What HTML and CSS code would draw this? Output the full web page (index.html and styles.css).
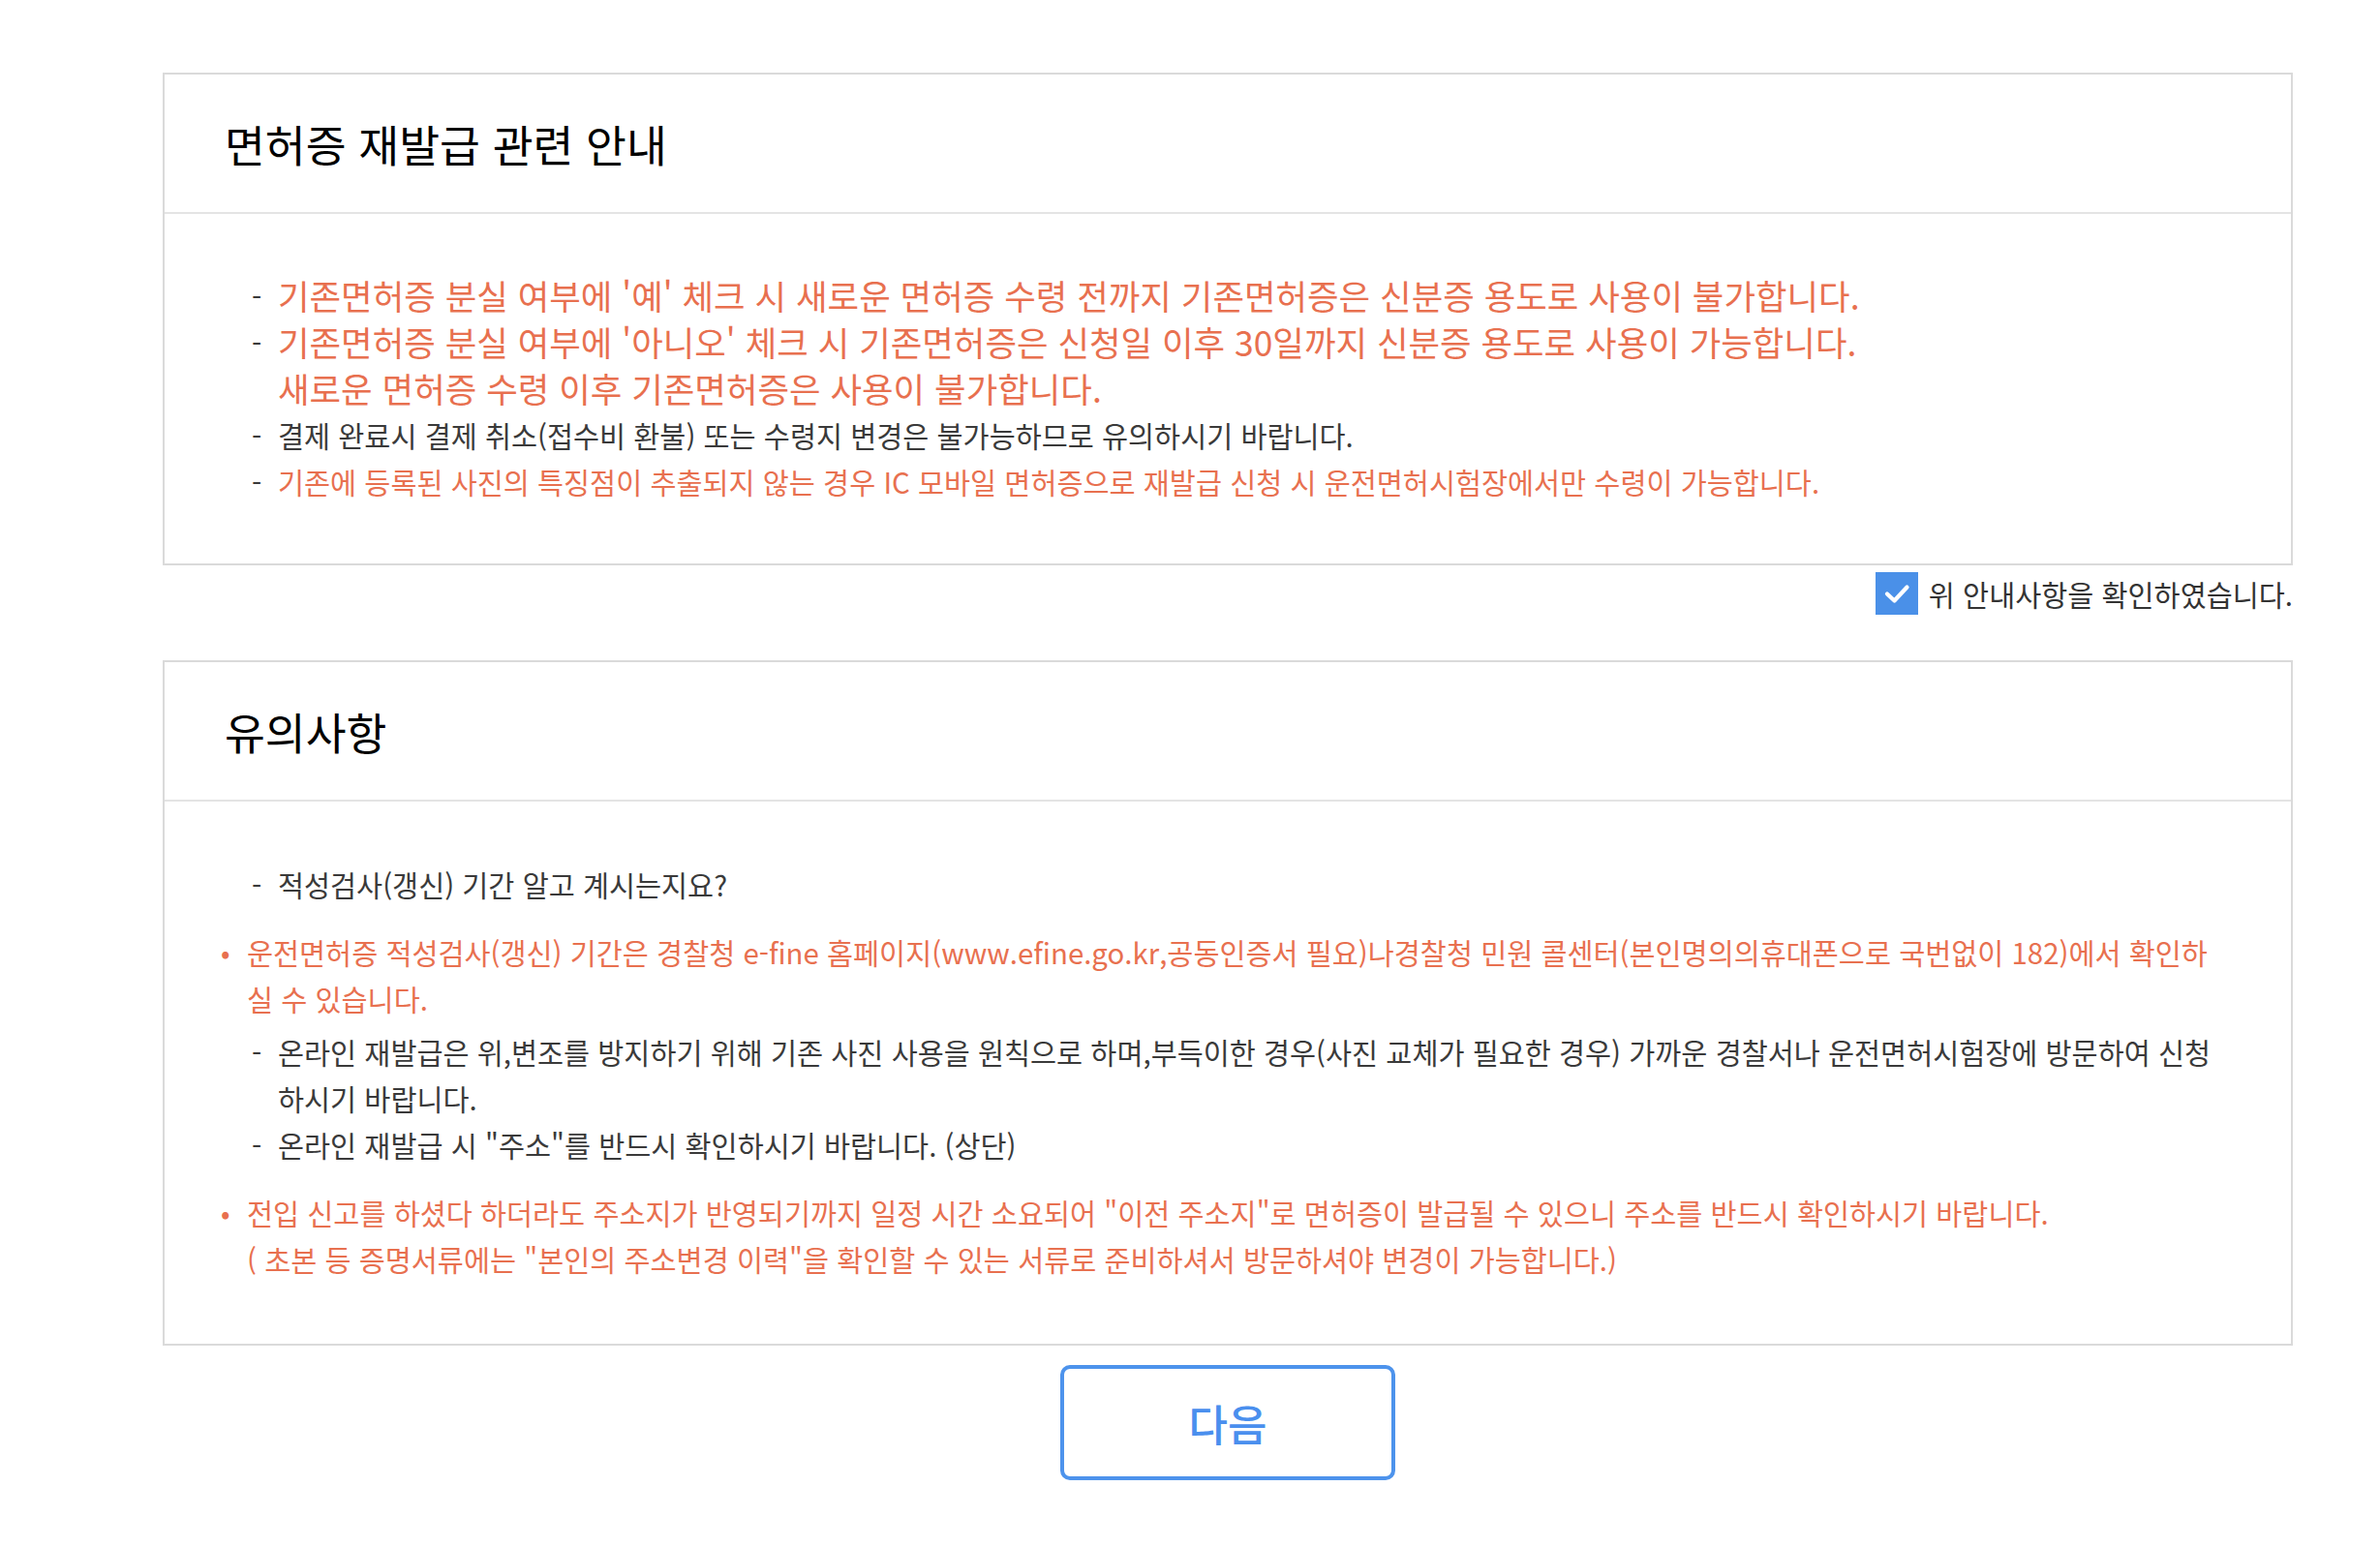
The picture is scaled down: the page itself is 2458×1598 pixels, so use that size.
FILE: index.html
```html
<!DOCTYPE html>
<html lang="ko">
<head>
<meta charset="utf-8">
<title>면허증 재발급 안내</title>
<link rel="stylesheet" href="styles.css">
</head>
<body>
<div class="page">
  <section class="panel">
    <h2 class="panel-title">면허증 재발급 관련 안내</h2>
    <div class="panel-body">
      <ul class="notice-list">
        <li class="item dash red large"><span class="mark">-</span><span class="txt">기존면허증 분실 여부에 '예' 체크 시 새로운 면허증 수령 전까지 기존면허증은 신분증 용도로 사용이 불가합니다.</span></li>
        <li class="item dash red large"><span class="mark">-</span><span class="txt">기존면허증 분실 여부에 '아니오' 체크 시 기존면허증은 신청일 이후 30일까지 신분증 용도로 사용이 가능합니다.<br>새로운 면허증 수령 이후 기존면허증은 사용이 불가합니다.</span></li>
        <li class="item dash"><span class="mark">-</span><span class="txt">결제 완료시 결제 취소(접수비 환불) 또는 수령지 변경은 불가능하므로 유의하시기 바랍니다.</span></li>
        <li class="item dash red"><span class="mark">-</span><span class="txt">기존에 등록된 사진의 특징점이 추출되지 않는 경우 IC 모바일 면허증으로 재발급 신청 시 운전면허시험장에서만 수령이 가능합니다.</span></li>
      </ul>
    </div>
  </section>

  <label class="confirm">
    <span class="checkbox"><svg viewBox="0 0 44 44" width="44" height="44"><polyline points="12,22.5 19.5,29.5 32.5,15.5" fill="none" stroke="#ffffff" stroke-width="4.2" stroke-linecap="round" stroke-linejoin="round"/></svg></span>
    <span class="confirm-text">위 안내사항을 확인하였습니다.</span>
  </label>

  <section class="panel">
    <h2 class="panel-title">유의사항</h2>
    <div class="panel-body second-body">
      <ul class="notice-list second">
        <li class="item dash"><span class="mark">-</span><span class="txt">적성검사(갱신) 기간 알고 계시는지요?</span></li>
        <li class="item bullet red"><span class="mark">•</span><span class="txt">운전면허증 적성검사(갱신) 기간은 경찰청 e-fine 홈페이지(www.efine.go.kr,공동인증서 필요)나경찰청 민원 콜센터(본인명의의휴대폰으로 국번없이 182)에서 확인하<br>실 수 있습니다.</span></li>
        <li class="item dash"><span class="mark">-</span><span class="txt">온라인 재발급은 위,변조를 방지하기 위해 기존 사진 사용을 원칙으로 하며,부득이한 경우(사진 교체가 필요한 경우) 가까운 경찰서나 운전면허시험장에 방문하여 신청<br>하시기 바랍니다.</span></li>
        <li class="item dash"><span class="mark">-</span><span class="txt">온라인 재발급 시 "주소"를 반드시 확인하시기 바랍니다. (상단)</span></li>
        <li class="item bullet red"><span class="mark">•</span><span class="txt">전입 신고를 하셨다 하더라도 주소지가 반영되기까지 일정 시간 소요되어 "이전 주소지"로 면허증이 발급될 수 있으니 주소를 반드시 확인하시기 바랍니다.<br>( 초본 등 증명서류에는 "본인의 주소변경 이력"을 확인할 수 있는 서류로 준비하셔서 방문하셔야 변경이 가능합니다.)</span></li>
      </ul>
    </div>
  </section>

  <div class="actions">
    <button class="btn-next" type="button">다음</button>
  </div>
</div>
</body>
</html>
```
FILE: styles.css
```css
html, body {
  margin: 0;
  padding: 0;
  background: #ffffff;
}
body {
  font-family: "Noto Sans CJK KR", "Noto Sans", sans-serif;
  color: #333333;
}
.page {
  width: 2200px;
  margin-left: 168px;
  padding-top: 75px;
}
.panel {
  border: 2px solid #dadada;
  background: #ffffff;
}
.panel-title {
  margin: 0;
  height: 144px;
  box-sizing: border-box;
  display: flex;
  align-items: center;
  padding-left: 62px;
  font-size: 45.5px;
  font-weight: 400;
  color: #000000;
  border-bottom: 2px solid #e4e4e4;
}
.panel-body {
  padding: 60px 0 61px 0;
}
.panel-body.second-body {
  padding: 61px 0 57px 0;
}
.notice-list {
  list-style: none;
  margin: 0;
  padding: 0 0 0 90px;
}
.notice-list.second {
  padding-left: 58px;
}
.item {
  display: flex;
  font-size: 29.4px;
  line-height: 48px;
  color: #3a3a3a;
}
.item.red {
  color: #e8704f;
}
.item.large {
  font-size: 35.4px;
}
.item .mark {
  flex: 0 0 27px;
  font-size: 29.4px;
  color: #3a3a3a;
}
.notice-list.second .item.dash {
  margin-left: 32px;
}
.item.bullet .mark {
  color: #e8704f;
  font-size: 28px;
}
.item.bullet {
  margin-top: 22px;
  margin-bottom: 7px;
}
.confirm {
  display: flex;
  justify-content: flex-end;
  align-items: center;
  gap: 11px;
  margin: 7px 0 47px 0;
}
.checkbox {
  width: 44px;
  height: 44px;
  background: #4a90e8;
  display: block;
}
.checkbox svg {
  display: block;
}
.confirm-text {
  font-size: 29.4px;
  color: #333333;
}
.actions {
  display: flex;
  justify-content: center;
  padding-top: 20px;
}
.btn-next {
  width: 346px;
  height: 119px;
  border: 4px solid #4d93ec;
  border-radius: 10px;
  background: #ffffff;
  color: #4a8fee;
  font-family: "Noto Sans CJK KR", "Noto Sans", sans-serif;
  font-size: 44px;
  font-weight: 500;
}
```
